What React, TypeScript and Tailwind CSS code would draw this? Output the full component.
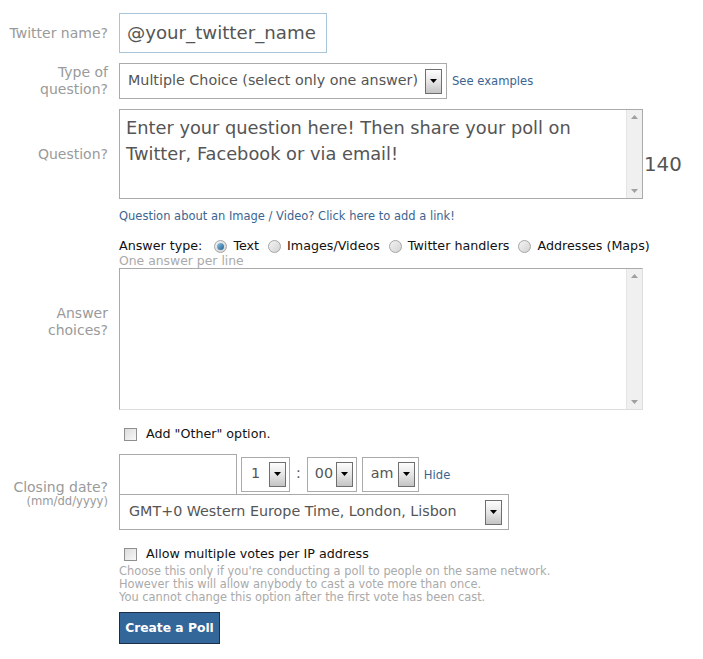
import React from "react";

const font = { fontFamily: '"DejaVu Sans", Tahoma, Verdana, sans-serif' };

function DropBtn({ h = 25 }: { h?: number }) {
  return (
    <div
      className="w-[17px] border border-[#6f6f6f] bg-gradient-to-b from-[#fdfdfd] via-[#e6e6e6] to-[#c4c4c4] flex items-center justify-center shrink-0"
      style={{ height: h }}
    >
      <svg width="7" height="4" viewBox="0 0 7 4">
        <path d="M0 0H7L3.5 4Z" fill="#000" />
      </svg>
    </div>
  );
}

function Scrollbar() {
  return (
    <div className="w-[16px] h-full bg-[#f0f0f0] border-l border-[#e4e4e4] flex flex-col justify-between items-center py-[5px] shrink-0">
      <svg width="7" height="4" viewBox="0 0 7 4">
        <path d="M0 4H7L3.5 0Z" fill="#a0a0a0" />
      </svg>
      <svg width="7" height="4" viewBox="0 0 7 4">
        <path d="M0 0H7L3.5 4Z" fill="#a0a0a0" />
      </svg>
    </div>
  );
}

function Radio({ checked }: { checked?: boolean }) {
  return (
    <span className="inline-flex w-[13px] h-[13px] rounded-full border border-[#a5a5a5] bg-gradient-to-br from-[#f4f4f4] to-[#d2d2d2] items-center justify-center ml-[9px] mr-[6px] shrink-0">
      {checked && <span className="w-[7px] h-[7px] rounded-full bg-gradient-to-br from-[#8fc6e8] to-[#1f5f8f]" />}
    </span>
  );
}

function Checkbox() {
  return (
    <span className="inline-block w-[13px] h-[13px] border border-[#8f8f8f] bg-gradient-to-br from-[#dcdcdc] to-[#f8f8f8] shrink-0" />
  );
}

function Label({ children, className = "" }: { children: React.ReactNode; className?: string }) {
  return (
    <div className={`w-[108px] shrink-0 text-right text-[14px] leading-[17px] text-[#9a9a9a] ${className}`}>{children}</div>
  );
}

export default function App() {
  return (
    <div className="w-[703px] h-[659px] bg-white text-[#555]" style={font}>
      <div className="pt-[13px]">
        {/* Twitter name */}
        <div className="flex items-center">
          <Label>Twitter name?</Label>
          <div className="ml-[11px] w-[208px] h-[40px] border border-[#a9c6d8] flex items-center pl-[7px] text-[18.2px] text-[#555]">
            @your_twitter_name
          </div>
        </div>

        {/* Type of question */}
        <div className="flex items-center mt-[10px]">
          <Label>
            Type of
            <br />
            question?
          </Label>
          <div className="ml-[11px] w-[328px] h-[36px] border border-[#aaa] flex items-center pl-[8px] pr-[4px] justify-between text-[14.3px]">
            <span>Multiple Choice (select only one answer)</span>
            <DropBtn />
          </div>
          <span className="ml-[5px] text-[11.6px] text-[#3b6590] mt-[2px]">See examples</span>
        </div>

        {/* Question */}
        <div className="flex items-center mt-[10px]">
          <Label>Question?</Label>
          <div className="ml-[11px] w-[524px] h-[90px] border border-[#aaa] flex">
            <div className="flex-1 pl-[6px] pt-[5px] pr-[4px] text-[17.8px] leading-[26px] text-[#555]">
              Enter your question here! Then share your poll on Twitter, Facebook or via email!
            </div>
            <Scrollbar />
          </div>
          <span className="ml-[1px] text-[19.8px] text-[#555] mt-[22px]">140</span>
        </div>

        <div className="ml-[119px] mt-[10px] text-[11.5px] leading-[14px] text-[#3b6590]">
          Question about an Image / Video? Click here to add a link!
        </div>

        {/* Answer type */}
        <div className="ml-[119px] mt-[15px] flex items-center text-[12.7px] leading-[16px] text-[#111]">
          <span className="mr-[3px]">Answer type:</span>
          <Radio checked />
          <span>Text</span>
          <Radio />
          <span>Images/Videos</span>
          <Radio />
          <span>Twitter handlers</span>
          <Radio />
          <span>Addresses (Maps)</span>
        </div>
        <div className="ml-[119px] text-[12.4px] leading-[14px] text-[#aaa]">One answer per line</div>

        {/* Answer choices */}
        <div className="flex items-center">
          <Label className="pb-[34px]">
            Answer
            <br />
            choices?
          </Label>
          <div className="ml-[11px] w-[524px] h-[142px] border border-[#aaa] border-r-[#ddd] border-b-[#ddd] flex">
            <div className="flex-1" />
            <Scrollbar />
          </div>
        </div>

        {/* Add Other */}
        <div className="ml-[124px] mt-[16px] flex items-center text-[12.7px] leading-[16px] text-[#111]">
          <Checkbox />
          <span className="ml-[9px]">Add "Other" option.</span>
        </div>

        {/* Closing date */}
        <div className="flex items-center mt-[12px]">
          <div className="w-[108px] shrink-0 text-right text-[#9a9a9a] pt-[2px]">
            <div className="text-[14px] leading-[16px]">Closing date?</div>
            <div className="text-[11.6px] leading-[13px]">(mm/dd/yyyy)</div>
          </div>
          <div className="ml-[11px] flex flex-col">
            <div className="flex items-center">
              <div className="w-[118px] h-[40px] border border-[#aaa] border-b-0" />
              <div className="ml-[4px] w-[49px] h-[35px] border border-[#aaa] flex items-center justify-between pl-[9px] pr-[3px] text-[14.3px]">
                <span>1</span>
                <DropBtn />
              </div>
              <span className="mx-[6px] text-[14.3px]">:</span>
              <div className="w-[50px] h-[35px] border border-[#aaa] flex items-center justify-between pl-[7px] pr-[3px] text-[14.3px]">
                <span>00</span>
                <DropBtn />
              </div>
              <div className="ml-[5px] w-[57px] h-[35px] border border-[#aaa] flex items-center justify-between pl-[8px] pr-[3px] text-[14.3px]">
                <span>am</span>
                <DropBtn />
              </div>
              <span className="ml-[5px] text-[11.6px] text-[#3b6590] mt-[3px]">Hide</span>
            </div>
            <div className="w-[390px] h-[36px] border border-[#aaa] flex items-center justify-between pl-[9px] pr-[6px] text-[14.3px]">
              <span>GMT+0 Western Europe Time, London, Lisbon</span>
              <DropBtn />
            </div>
          </div>
        </div>

        {/* Allow multiple */}
        <div className="ml-[124px] mt-[16px] flex items-center text-[12.7px] leading-[16px] text-[#111]">
          <Checkbox />
          <span className="ml-[9px]">Allow multiple votes per IP address</span>
        </div>
        <div className="ml-[119px] mt-[3px] text-[11.4px] leading-[13px] text-[#aaa]">
          Choose this only if you're conducting a poll to people on the same network.
          <br />
          However this will allow anybody to cast a vote more than once.
          <br />
          You cannot change this option after the first vote has been cast.
        </div>

        <div className="ml-[119px] mt-[8px]">
          <div className="inline-flex items-center justify-center w-[101px] h-[32px] bg-[#336699] border border-[#1c2e4a] text-white font-bold text-[12.3px]">
            Create a Poll
          </div>
        </div>
      </div>
    </div>
  );
}
